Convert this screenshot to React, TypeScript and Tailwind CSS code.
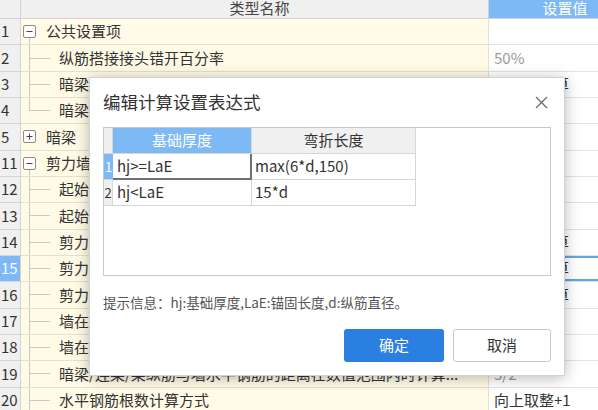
import React from "react";

type Row = {
  n: string;
  kind: "group" | "child";
  open?: boolean;
  last?: boolean;
  text: string;
  value?: string;
  gray?: boolean;
  sel?: boolean;
};

const rows: Row[] = [
  { n: "1", kind: "group", open: true, text: "公共设置项" },
  { n: "2", kind: "child", text: "纵筋搭接接头错开百分率", value: "50%", gray: true },
  { n: "3", kind: "child", text: "暗梁顶部纵筋的锚固长度", value: "按规范计算" },
  { n: "4", kind: "child", last: true, text: "暗梁箍筋距支座边的距离", value: "50" },
  { n: "5", kind: "group", open: false, text: "暗梁" },
  { n: "11", kind: "group", open: true, text: "剪力墙" },
  { n: "12", kind: "child", text: "起始水平分布筋距楼面的距离", value: "50" },
  { n: "13", kind: "child", text: "起始竖向分布筋距暗柱边的距离", value: "s/2" },
  { n: "14", kind: "child", text: "剪力墙水平钢筋锚固长度", value: "按规范计算" },
  { n: "15", kind: "child", sel: true, text: "剪力墙竖向钢筋锚固长度", value: "按规范计算" },
  { n: "16", kind: "child", text: "剪力墙拉筋排布方式", value: "按规范计算" },
  { n: "17", kind: "child", text: "墙在基础中的插筋构造", value: "是" },
  { n: "18", kind: "child", text: "墙在顶层的锚固构造", value: "是" },
  { n: "19", kind: "child", text: "暗梁/连梁/梁纵筋与墙水平钢筋的距离在数值范围内时计算...", value: "3/2", gray: true },
  { n: "20", kind: "child", text: "水平钢筋根数计算方式", value: "向上取整+1" },
];

function TreeCell({ r }: { r: Row }) {
  if (r.kind === "group") {
    return (
      <div className="flex items-stretch pl-[2px] h-full">
        <div className="flex flex-col items-center w-[13px] shrink-0">
          <div className="flex-1" />
          <div className="w-[13px] h-[13px] border border-[#8a8a8a] rounded-[2px] bg-white flex items-center justify-center">
            <svg width="9" height="9" viewBox="0 0 9 9">
              <path d="M1.5 4.5H7.5" stroke="#444" strokeWidth="1" />
              {!r.open && <path d="M4.5 1.5V7.5" stroke="#444" strokeWidth="1" />}
            </svg>
          </div>
          <div className={r.open ? "flex-1 w-px bg-[#c8c8c8]" : "flex-1 w-px"} />
        </div>
        <span className="ml-[10px] self-center whitespace-nowrap">{r.text}</span>
      </div>
    );
  }
  return (
    <div className="flex items-stretch h-full overflow-hidden">
      <div className="ml-[8px] w-[21px] shrink-0 flex flex-col">
        <div className="flex-1 border-l border-b border-[#c8c8c8]" />
        <div className={r.last ? "flex-1" : "flex-1 border-l border-[#c8c8c8]"} />
      </div>
      <span className="ml-[9px] self-center whitespace-nowrap">{r.text}</span>
    </div>
  );
}

export default function App() {
  return (
    <div className="relative w-[598px] h-[410px] overflow-hidden bg-white text-[#333] font-['Noto_Sans_CJK_SC',sans-serif]">
      <div className="flex flex-col w-[641px]">
        <div className="flex h-[19px] border-b border-[#d4d4d4] bg-[#f0f0f0]">
          <div className="w-[21px] shrink-0 border-r border-[#d4d4d4]" />
          <div className="w-[468px] shrink-0 border-r border-[#d4d4d4] flex justify-center pl-[10px] text-[15px] leading-[16px] text-[#444]">
            类型名称
          </div>
          <div className="w-[152px] shrink-0 bg-[#7cb9f5] text-white flex justify-center text-[15px] leading-[16px]">
            设置值
          </div>
        </div>
        {rows.map((r) => (
          <div key={r.n} className="flex h-[26.33px] text-[15px]">
            <div
              className={
                r.sel
                  ? "w-[21px] shrink-0 border-r border-b border-[#d4d4d4] pl-[1px] flex items-center bg-[#7cb9f5] text-white"
                  : "w-[21px] shrink-0 border-r border-b border-[#d4d4d4] pl-[1px] flex items-center bg-[#f0f0f0] text-[#333]"
              }
            >
              {r.n}
            </div>
            <div className="w-[468px] shrink-0 border-r border-b border-[#e4e1cf] bg-[#fffbe6] overflow-hidden">
              <TreeCell r={r} />
            </div>
            <div className="w-[152px] shrink-0 border-b border-[#e2e2e2] bg-white">
              <div
                className={
                  r.sel
                    ? "h-full flex items-center pl-[5px] border-y-2 border-[#5ea6ee] whitespace-nowrap"
                    : r.gray
                    ? "h-full flex items-center pl-[5px] text-[#999] whitespace-nowrap"
                    : "h-full flex items-center pl-[5px] text-[#333] whitespace-nowrap"
                }
              >
                {r.value}
              </div>
            </div>
          </div>
        ))}
      </div>

      <div className="absolute left-[89px] top-[77px] w-[476px] h-[299px] bg-white border border-[#d2d2d2] shadow-[0_2px_14px_rgba(0,0,0,0.28)] flex flex-col">
        <div className="mt-[10px] h-[28px] flex items-center justify-between pl-[13px] pr-[16px]">
          <span className="text-[17.5px] text-[#333]">编辑计算设置表达式</span>
          <svg width="13" height="13" viewBox="0 0 13 13">
            <path d="M1 1L12 12M12 1L1 12" stroke="#6a6a6a" strokeWidth="1.3" />
          </svg>
        </div>
        <div className="mt-[11px] mx-[13px] h-[149px] border border-[#c8c8c8] flex flex-col text-[15px]">
          <div className="flex h-[26px]">
            <div className="w-[9px] shrink-0 bg-[#efefef] border-r border-b border-[#d6d6d6]" />
            <div className="w-[139px] shrink-0 bg-[#7cb9f5] text-white border-r border-b border-[#d6d6d6] flex items-center justify-center">
              基础厚度
            </div>
            <div className="w-[164px] shrink-0 bg-[#f0f0f0] text-[#333] border-r border-b border-[#d6d6d6] flex items-center justify-center">
              弯折长度
            </div>
          </div>
          <div className="flex h-[26px]">
            <div className="w-[9px] shrink-0 bg-[#7cb9f5] text-white text-[13px] border-b border-[#d6d6d6] flex items-center justify-center">
              1
            </div>
            <div className="w-[139px] shrink-0 border-r-2 border-b-2 border-[#707070] flex items-center pl-[4px]">
              hj&gt;=LaE
            </div>
            <div className="w-[164px] shrink-0 border-r border-b border-[#d6d6d6] flex items-center pl-[3px]">
              max(6*d,150)
            </div>
          </div>
          <div className="flex h-[26px]">
            <div className="w-[9px] shrink-0 bg-[#efefef] text-[13px] border-r border-b border-[#d6d6d6] flex items-center justify-center">
              2
            </div>
            <div className="w-[139px] shrink-0 border-r border-b border-[#d6d6d6] flex items-center pl-[4px]">
              hj&lt;LaE
            </div>
            <div className="w-[164px] shrink-0 border-r border-b border-[#d6d6d6] flex items-center pl-[3px]">
              15*d
            </div>
          </div>
        </div>
        <div className="mt-[16px] h-[20px] pl-[13px] flex items-center text-[13.5px] text-[#555] whitespace-nowrap">
          提示信息：hj:基础厚度,LaE:锚固长度,d:纵筋直径。
        </div>
        <div className="mt-[17px] flex justify-end gap-[9px] pr-[13px]">
          <div className="w-[100px] h-[33px] bg-[#2b7fe0] text-white rounded-[3px] text-[15px] flex items-center justify-center">
            确定
          </div>
          <div className="w-[98px] h-[33px] border border-[#c9c9c9] bg-white text-[#333] rounded-[3px] text-[15px] flex items-center justify-center">
            取消
          </div>
        </div>
      </div>
    </div>
  );
}
